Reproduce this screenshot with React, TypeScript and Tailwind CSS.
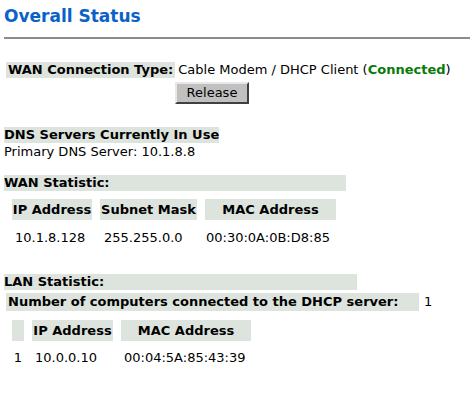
const font = { fontFamily: '"DejaVu Sans", Verdana, sans-serif' };

function Cell({ w, children, className = '' }: { w: string; children?: React.ReactNode; className?: string }) {
  return (
    <div className={`${w} h-[21px] bg-[#dde3dd] flex items-center justify-center font-bold whitespace-nowrap ${className}`}>{children}</div>
  );
}

export default function App() {
  return (
    <div className="w-[470px] h-[393px] bg-white text-black overflow-hidden text-[13px] leading-[16px] whitespace-nowrap" style={font}>
      <h1 className="pl-[4px] pt-[6px] text-[17px] leading-[21px] font-bold text-[#0a62c8]">Overall Status</h1>
      <div className="ml-[4px] mt-[10px] h-[2px] bg-[#8c8c8c]" />

      <div className="mt-[22px] h-[18px] flex items-center pl-[6px]">
        <div className="h-[16px] bg-[#dde3dd] font-bold flex items-center px-[2px]">WAN Connection Type:</div>
        <div className="ml-[3px]">
          Cable Modem / DHCP Client (<span className="text-[#0a7a0a] font-bold">Connected</span>)
        </div>
      </div>
      <div className="pl-[175px] mt-[3px] flex">
        <button className="w-[74px] h-[22px] bg-[#c0c0c0] leading-[16px] border-2 border-t-[#e8e8e8] border-l-[#e8e8e8] border-r-[#404040] border-b-[#404040]">
          Release
        </button>
      </div>

      <div className="mt-[23px] pl-[4px]">
        <div className="w-fit min-w-[211px] h-[16px] bg-[#dde3dd] font-bold flex items-center">DNS Servers Currently In Use</div>
        <div className="mt-[1px]">Primary DNS Server: 10.1.8.8</div>
      </div>

      <div className="mt-[15px] pl-[4px]">
        <div className="w-[342px] h-[16px] bg-[#dde3dd] font-bold flex items-center">WAN Statistic:</div>
        <div className="mt-[8px] pl-[8px] flex gap-[8px]">
          <Cell w="w-[80px]">IP Address</Cell>
          <Cell w="w-[97px]">Subnet Mask</Cell>
          <Cell w="w-[131px]">MAC Address</Cell>
        </div>
        <div className="mt-[10px] pl-[8px] flex gap-[8px]">
          <div className="w-[80px] pl-[3px]">10.1.8.128</div>
          <div className="w-[97px] pl-[4px]">255.255.0.0</div>
          <div className="w-[131px] pl-[1px]">00:30:0A:0B:D8:85</div>
        </div>
      </div>

      <div className="mt-[28px] pl-[4px]">
        <div className="w-[353px] h-[16px] bg-[#dde3dd] font-bold flex items-center">LAN Statistic:</div>
        <div className="mt-[3px] pl-[2px] flex items-center">
          <div className="w-[413px] h-[18px] bg-[#dde3dd] font-bold flex items-center pl-[2px]">
            Number of computers connected to the DHCP server:
          </div>
          <div className="ml-[5px]">1</div>
        </div>
        <div className="mt-[9px] pl-[8px] flex gap-[8px]">
          <Cell w="w-[12px]" />
          <Cell w="w-[81px]">IP Address</Cell>
          <Cell w="w-[130px]">MAC Address</Cell>
        </div>
        <div className="mt-[9px] pl-[8px] flex gap-[8px]">
          <div className="w-[12px] text-center">1</div>
          <div className="w-[81px] pl-[3px]">10.0.0.10</div>
          <div className="w-[130px] pl-[3px]">00:04:5A:85:43:39</div>
        </div>
      </div>
    </div>
  );
}
